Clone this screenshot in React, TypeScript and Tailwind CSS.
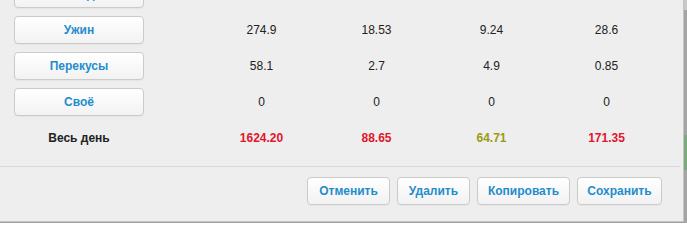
const rows = [
  { label: "Обед", values: ["", "", "", ""] },
  { label: "Ужин", values: ["274.9", "18.53", "9.24", "28.6"] },
  { label: "Перекусы", values: ["58.1", "2.7", "4.9", "0.85"] },
  { label: "Своё", values: ["0", "0", "0", "0"] },
];

const totals = [
  { value: "1624.20", color: "text-[#e0162b]" },
  { value: "88.65", color: "text-[#e0162b]" },
  { value: "64.71", color: "text-[#9c9a14]" },
  { value: "171.35", color: "text-[#e0162b]" },
];

const btn =
  "h-[28px] rounded-[4px] border border-[#cbcbcb] bg-gradient-to-b from-white to-[#f2f2f2] text-[12px] font-bold text-[#1f8dcc] shadow-[0_1px_1px_rgba(0,0,0,0.04)]";

export default function App() {
  return (
    <div className="flex h-[223px] w-[687px] overflow-hidden bg-[#9e9e9e] font-['Liberation_Sans',Arial,sans-serif]">
      <div className="flex h-[222px] w-[684px] flex-col overflow-hidden border-r border-b border-[#c4c4c4] bg-[#eeeeee]">
        {/* Meal table */}
        <div className="mt-[-20px] flex flex-col gap-[8px] pl-[14px]">
          {rows.map((row) => (
            <div key={row.label} className="grid h-[28px] grid-cols-[190px_115px_115px_115px_115px] items-center">
              <button className={`${btn} w-[130px]`}>{row.label}</button>
              {row.values.map((v, i) => (
                <div key={i} className="text-center text-[12px] text-[#222]">
                  {v}
                </div>
              ))}
            </div>
          ))}
          <div className="grid h-[28px] grid-cols-[190px_115px_115px_115px_115px] items-center">
            <div className="w-[130px] text-center text-[12px] font-bold text-[#222]">Весь день</div>
            {totals.map((t) => (
              <div key={t.value} className={`text-center text-[12px] font-bold ${t.color}`}>
                {t.value}
              </div>
            ))}
          </div>
        </div>

        <div className="mt-[14px] mr-[3px] h-px bg-[#d8d8d8]" />

        {/* Footer actions */}
        <div className="mt-[10px] flex justify-end gap-[7px] pr-[21px]">
          <button className={`${btn} w-[83px]`}>Отменить</button>
          <button className={`${btn} w-[73px]`}>Удалить</button>
          <button className={`${btn} w-[93px]`}>Копировать</button>
          <button className={`${btn} w-[85px]`}>Сохранить</button>
        </div>
      </div>

      {/* backdrop strip */}
      <div className="flex w-[3px] flex-col">
        <div className="h-[10px] bg-[#c9c9c9]" />
        <div className="h-[125px] bg-[#a4a4a4]" />
        <div className="h-[35px] bg-[#7ea87e]" />
        <div className="flex-1 bg-[#a4a4a4]" />
      </div>
    </div>
  );
}
